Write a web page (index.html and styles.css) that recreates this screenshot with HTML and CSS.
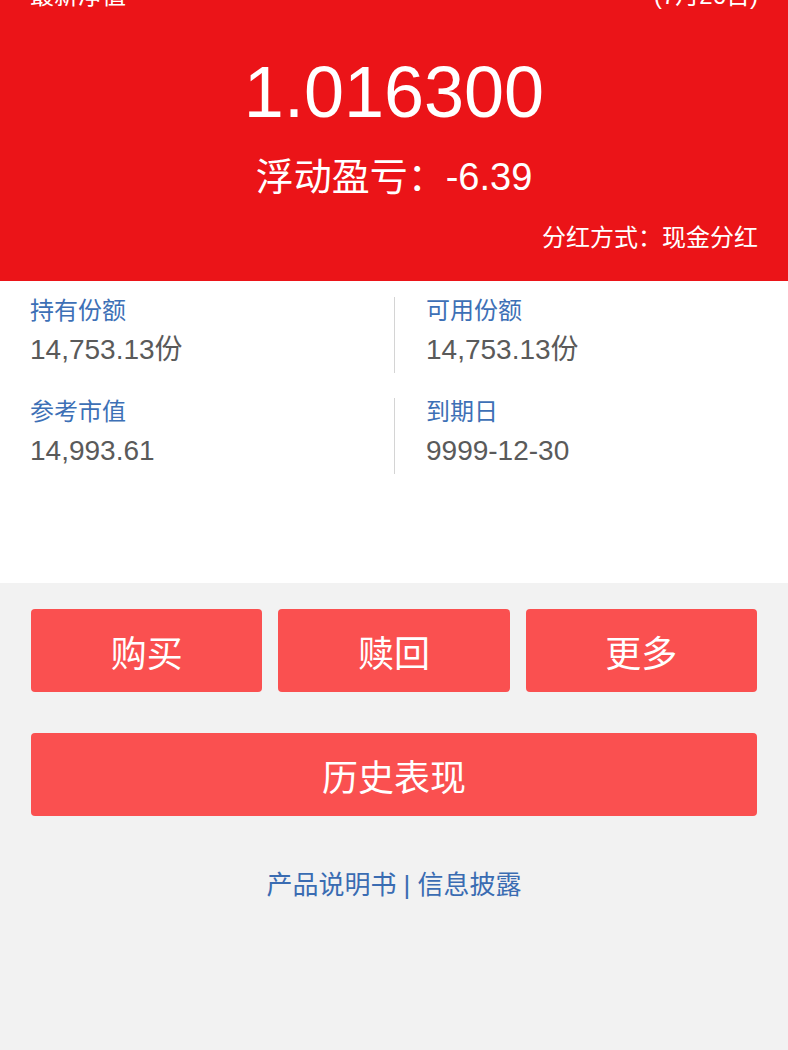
FILE: index.html
```html
<!DOCTYPE html>
<html lang="zh-CN">
<head>
  <meta charset="UTF-8" />
  <title>持仓详情</title>
  <meta name="viewport" content="width=device-width, initial-scale=1.0" />
  <link rel="stylesheet" href="styles.css">
</head>
<body>

  <header class="summary">
    <div class="summary-top">
      <span>最新净值</span>
      <span>(7月26日)</span>
    </div>
    <div class="nav-value">1.016300</div>
    <div class="profit">浮动盈亏：-6.39</div>
    <div class="dividend">分红方式：现金分红</div>
  </header>

  <section class="holdings">
    <div class="cell">
      <div class="label">持有份额</div>
      <div class="value">14,753.13份</div>
    </div>
    <div class="cell">
      <div class="label">可用份额</div>
      <div class="value">14,753.13份</div>
    </div>
    <div class="cell">
      <div class="label">参考市值</div>
      <div class="value">14,993.61</div>
    </div>
    <div class="cell">
      <div class="label">到期日</div>
      <div class="value">9999-12-30</div>
    </div>
  </section>

  <div class="actions">
    <div class="btn-row">
      <button class="btn">购买</button>
      <button class="btn">赎回</button>
      <button class="btn">更多</button>
    </div>
    <button class="btn btn-wide">历史表现</button>
    <div class="links">
      <a href="#">产品说明书</a> | <a href="#">信息披露</a>
    </div>
  </div>

</body>
</html>
```

FILE: styles.css
```css
* {
  box-sizing: border-box;
}

body {
  margin: 0;
  padding: 0;
  font-family: "Liberation Sans", "Noto Sans CJK SC", sans-serif;
  background: #f2f2f2;
  overflow: hidden;
}

.summary {
  background: #eb1418;
  color: #fff;
  height: 281px;
  padding: 0 30px;
  overflow: hidden;
}

/* header row is partly scrolled off the top */
.summary-top {
  display: flex;
  justify-content: space-between;
  font-size: 24px;
  line-height: 24px;
  margin-top: -16px;
}

.nav-value {
  text-align: center;
  font-size: 72px;
  line-height: 72px;
  margin-top: 48px;
}

.profit {
  text-align: center;
  font-size: 38px;
  line-height: 40px;
  margin-top: 29px;
}

.dividend {
  text-align: right;
  font-size: 24px;
  line-height: 30px;
  margin-top: 26px;
}

.holdings {
  background: #fff;
  height: 302px;
  padding-top: 16px;
  display: grid;
  grid-template-columns: 394px 1fr;
  grid-auto-rows: 76px;
  row-gap: 25px;
}

.cell {
  padding-left: 30px;
}

.cell:nth-child(2n) {
  border-left: 1px solid #d4d4d4;
  padding-left: 31px;
}

.label {
  color: #3d70b6;
  font-size: 24px;
  line-height: 28px;
}

.value {
  color: #5a5a5a;
  font-size: 28px;
  line-height: 34px;
  margin-top: 8px;
}

.actions {
  padding: 26px 31px 0;
}

.btn-row {
  display: grid;
  grid-template-columns: repeat(3, 1fr);
  column-gap: 16px;
}

.btn {
  height: 83px;
  background: #fa5050;
  color: #fff;
  border: none;
  border-radius: 4px;
  font-family: inherit;
  font-size: 36px;
  padding: 0;
  width: 100%;
}

.btn-wide {
  display: block;
  margin-top: 41px;
}

.links {
  text-align: center;
  color: #3a6cb2;
  font-size: 26px;
  line-height: 36px;
  margin-top: 51px;
}

.links a {
  color: #3a6cb2;
  text-decoration: none;
}
```
